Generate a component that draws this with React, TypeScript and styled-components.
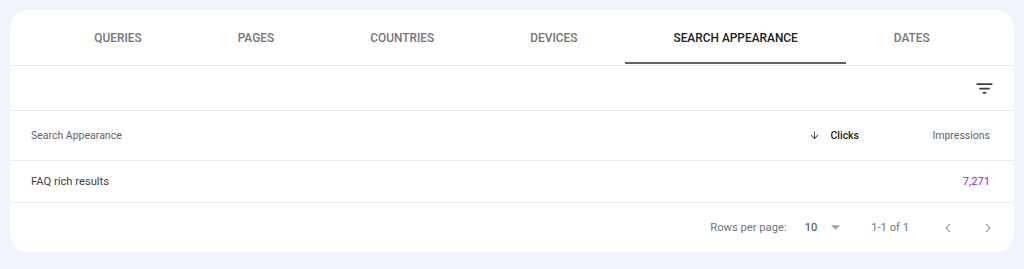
import React from "react";
import styled, { createGlobalStyle } from "styled-components";

const Global = createGlobalStyle`
  html, body { margin: 0; padding: 0; background: #f1f4fb; }
  body { font-family: Roboto, "Liberation Sans", Arial, sans-serif; }
`;

const Page = styled.div`
  padding: 10px;
  box-sizing: border-box;
  width: 1024px;
  height: 269px;
`;

const Card = styled.div`
  width: 1004px;
  height: 242px;
  background: #ffffff;
  border-radius: 18px;
  overflow: hidden;
  display: flex;
  flex-direction: column;
`;

const TabBar = styled.div`
  display: flex;
  justify-content: center;
  border-bottom: 1px solid #e8eaed;
  height: 55px;
`;

const Tab = styled.div<{ $active?: boolean }>`
  position: relative;
  display: flex;
  align-items: center;
  justify-content: center;
  padding: 0 48px;
  font-size: 11.9px;
  font-weight: 500;
  text-transform: uppercase;
  color: ${(p) => (p.$active ? "#202124" : "#757575")};
  &::after {
    content: "";
    position: absolute;
    left: 0;
    right: 0;
    bottom: 1px;
    height: 2px;
    background: ${(p) => (p.$active ? "#5f6368" : "transparent")};
  }
`;

const Toolbar = styled.div`
  height: 44px;
  border-bottom: 1px solid #e8eaed;
  display: flex;
  align-items: center;
  justify-content: flex-end;
  padding-right: 19px;
`;

const IconBtn = styled.div`
  display: flex;
  align-items: center;
  justify-content: center;
  color: #3c4043;
`;

const Row = styled.div<{ $h: number }>`
  display: grid;
  grid-template-columns: 1fr 120px 131px;
  align-items: center;
  height: ${(p) => p.$h}px;
  border-bottom: 1px solid #e8eaed;
  padding: 0 24px 0 21px;
`;

const HeadCell = styled.div<{ $right?: boolean; $strong?: boolean }>`
  font-size: 10.5px;
  font-weight: ${(p) => (p.$strong ? 500 : 400)};
  color: ${(p) => (p.$strong ? "#202124" : "#5f6368")};
  display: flex;
  align-items: center;
  justify-content: ${(p) => (p.$right ? "flex-end" : "flex-start")};
  gap: 10px;
`;

const Cell = styled.div<{ $right?: boolean; $color?: string }>`
  font-size: 11.2px;
  color: ${(p) => p.$color || "#3c4043"};
  text-align: ${(p) => (p.$right ? "right" : "left")};
`;

const Footer = styled.div`
  flex: 1;
  display: flex;
  align-items: center;
  justify-content: flex-end;
  padding-right: 23px;
  font-size: 11.2px;
  color: #70757a;
`;

const Label = styled.span`
  margin-right: 18px;
`;

const Select = styled.div`
  display: flex;
  align-items: center;
  color: #3c4043;
  gap: 14px;
  margin-right: 31px;
`;

const Range = styled.span`
  margin-right: 36px;
`;

const Nav = styled.div`
  display: flex;
  align-items: center;
  gap: 34px;
  color: #9aa0a6;
`;

const Filter = () => (
  <svg width="21" height="21" viewBox="0 0 24 24" fill="currentColor">
    <path d="M10 18h4v-2h-4v2zM3 6v2h18V6H3zm3 7h12v-2H6v2z" />
  </svg>
);

const ArrowDown = () => (
  <svg width="11" height="11" viewBox="0 0 24 24" fill="#3c4043">
    <path d="M20 12l-1.41-1.41L13 16.17V4h-2v12.17l-5.58-5.59L4 12l8 8 8-8z" />
  </svg>
);

const Caret = () => (
  <svg width="9" height="5" viewBox="0 0 10 5" fill="#9aa0a6">
    <path d="M0 0l5 5 5-5z" />
  </svg>
);

const Chevron = ({ dir }: { dir: "left" | "right" }) => (
  <svg width="6" height="10" viewBox="0 0 6 10" fill="none" stroke="currentColor" strokeWidth="1.2">
    {dir === "left" ? <path d="M5 1L1 5l4 4" /> : <path d="M1 1l4 4-4 4" />}
  </svg>
);

const tabs = ["Queries", "Pages", "Countries", "Devices", "Search appearance", "Dates"];

export default function App() {
  return (
    <>
      <Global />
      <Page>
        <Card>
          <TabBar>
            {tabs.map((t) => (
              <Tab key={t} $active={t === "Search appearance"}>
                {t}
              </Tab>
            ))}
          </TabBar>
          <Toolbar>
            <IconBtn>
              <Filter />
            </IconBtn>
          </Toolbar>
          <Row $h={49}>
            <HeadCell>Search Appearance</HeadCell>
            <HeadCell $right $strong>
              <ArrowDown />
              Clicks
            </HeadCell>
            <HeadCell $right>Impressions</HeadCell>
          </Row>
          <Row $h={41}>
            <Cell>FAQ rich results</Cell>
            <Cell $right />
            <Cell $right $color="#8430ce">
              7,271
            </Cell>
          </Row>
          <Footer>
            <Label>Rows per page:</Label>
            <Select>
              10
              <Caret />
            </Select>
            <Range>1-1 of 1</Range>
            <Nav>
              <Chevron dir="left" />
              <Chevron dir="right" />
            </Nav>
          </Footer>
        </Card>
      </Page>
    </>
  );
}
